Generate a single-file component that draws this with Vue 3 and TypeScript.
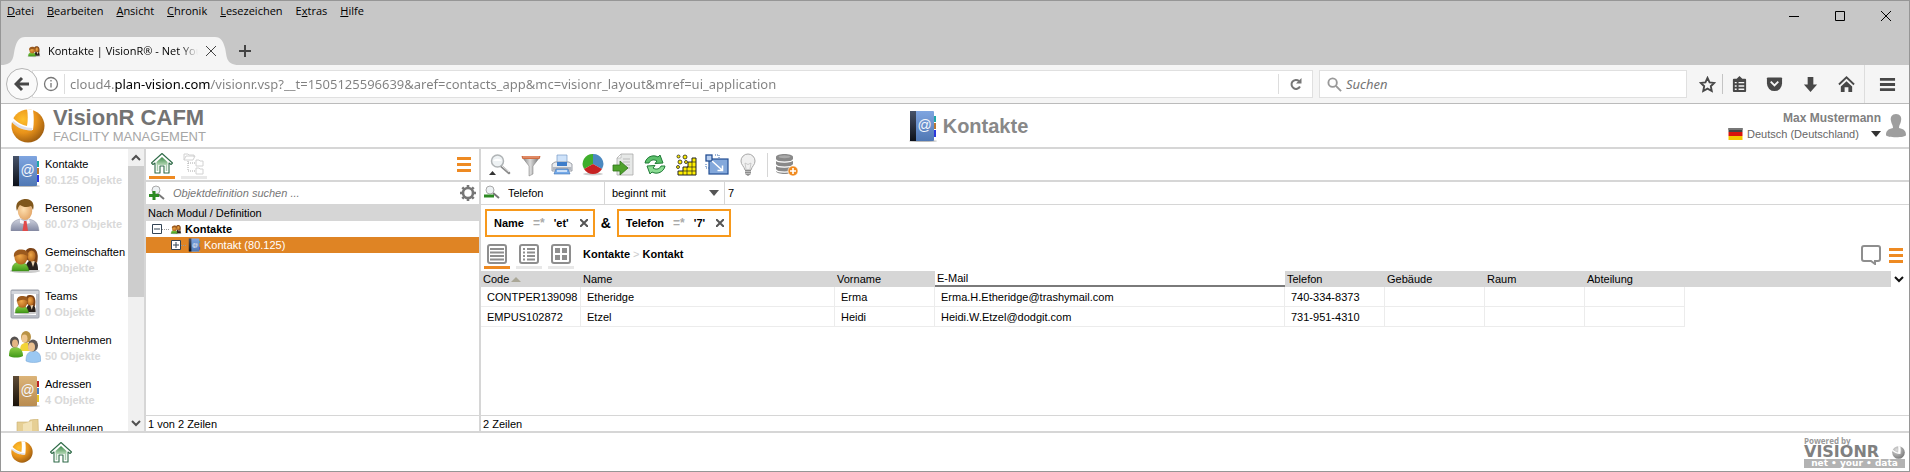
<script setup lang="ts">
import { ref } from 'vue'

interface Entry { label: string; count: string; icon: string }
interface Column { label: string; cls: string }

const menus: [string, string, string][] = [
  ['', 'D', 'atei'], ['', 'B', 'earbeiten'], ['', 'A', 'nsicht'], ['', 'C', 'hronik'],
  ['', 'L', 'esezeichen'], ['E', 'x', 'tras'], ['', 'H', 'ilfe'],
]
const url = ref('cloud4.plan-vision.com/visionr.vsp?__t=1505125596639&aref=contacts_app&mc=visionr_layout&mref=ui_application')
const entries: Entry[] = [
  { label: 'Kontakte', count: '80.125 Objekte', icon: 'book' },
  { label: 'Personen', count: '80.073 Objekte', icon: 'person' },
  { label: 'Gemeinschaften', count: '2 Objekte', icon: 'pair' },
  { label: 'Teams', count: '0 Objekte', icon: 'team' },
  { label: 'Unternehmen', count: '50 Objekte', icon: 'company' },
  { label: 'Adressen', count: '4 Objekte', icon: 'addresses' },
  { label: 'Abteilungen', count: '', icon: 'folder' },
]
const tools: [string, string][] = [
  ['search', 'Suchen'], ['funnel', 'Filter'], ['printer', 'Drucken'], ['pie', 'Diagramm'], ['export', 'Exportieren'],
  ['refresh', 'Aktualisieren'], ['cells', 'Tabelle'], ['resize', 'Anpassen'], ['bulb', 'Hinweis'],
]
const views: [string, string][] = [['rows', 'Tabelle'], ['list', 'Liste'], ['tiles', 'Kacheln']]
const chips = [{ field: 'Name', value: "'et'" }, { field: 'Telefon', value: "'7'" }]
const columns: Column[] = [
  { label: 'Code', cls: 'c-code' }, { label: 'Name', cls: 'c-name' }, { label: 'Vorname', cls: 'c-first' },
  { label: 'E-Mail', cls: 'c-mail' }, { label: 'Telefon', cls: 'c-std' }, { label: 'Gebäude', cls: 'c-std' },
  { label: 'Raum', cls: 'c-std' }, { label: 'Abteilung', cls: 'c-std' },
]
const rows: string[][] = [
  ['CONTPER139098', 'Etheridge', 'Erma', 'Erma.H.Etheridge@trashymail.com', '740-334-8373', '', '', ''],
  ['EMPUS102872', 'Etzel', 'Heidi', 'Heidi.W.Etzel@dodgit.com', '731-951-4310', '', '', ''],
]
const field = ref('Telefon')
const term = ref('7')
const view = ref('rows')
</script>

<template>
  <div class="window">
    <svg class="defs" aria-hidden="true">
      <defs>
        <linearGradient id="gBlue" x1="0" y1="0" x2="0" y2="1"><stop offset="0" stop-color="#7fa5e0" /><stop offset="1" stop-color="#5078b4" /></linearGradient>
        <linearGradient id="gTan" x1="0" y1="0" x2="0" y2="1"><stop offset="0" stop-color="#dcb479" /><stop offset="1" stop-color="#b98c50" /></linearGradient>
        <linearGradient id="gDark" x1="0" y1="0" x2="0" y2="1"><stop offset="0" stop-color="#47536a" /><stop offset="1" stop-color="#0c1018" /></linearGradient>
        <linearGradient id="gBrown" x1="0" y1="0" x2="0" y2="1"><stop offset="0" stop-color="#5f4c36" /><stop offset="1" stop-color="#1a120a" /></linearGradient>
        <linearGradient id="gGreen" x1="0" y1="0" x2="0" y2="1"><stop offset="0" stop-color="#3c8a48" /><stop offset="1" stop-color="#b5d8b6" /></linearGradient>
        <linearGradient id="gShirt" x1="0" y1="0" x2="0" y2="1"><stop offset="0" stop-color="#cfd2de" /><stop offset="1" stop-color="#8288a2" /></linearGradient>
        <linearGradient id="gLime" x1="0" y1="0" x2="0" y2="1"><stop offset="0" stop-color="#8fd048" /><stop offset="1" stop-color="#3f9818" /></linearGradient>
        <linearGradient id="gMetal" x1="0" y1="0" x2="1" y2="0"><stop offset="0" stop-color="#777" /><stop offset=".45" stop-color="#ddd" /><stop offset="1" stop-color="#666" /></linearGradient>
        <radialGradient id="gSkin" cx=".4" cy=".4" r=".7"><stop offset="0" stop-color="#ffe0b0" /><stop offset="1" stop-color="#e0a060" /></radialGradient>
        <radialGradient id="gBall" cx=".35" cy=".3" r=".75"><stop offset="0" stop-color="#ffc02c" /><stop offset=".55" stop-color="#e8921a" /><stop offset="1" stop-color="#9c5c10" /></radialGradient>
        <radialGradient id="gGray" cx=".35" cy=".3" r=".75"><stop offset="0" stop-color="#ddd" /><stop offset="1" stop-color="#777" /></radialGradient>
        <radialGradient id="gFace" cx=".4" cy=".4" r=".7"><stop offset="0" stop-color="#f0a848" /><stop offset="1" stop-color="#a85c18" /></radialGradient>
      </defs>

      <symbol id="book" viewBox="0 0 32 32">
        <ellipse cx="17" cy="31" rx="14" ry="1" fill="#bbb" />
        <path d="M28 6h2v6h-2z" fill="#1fa6a6" /><path d="M28 13h2v6h-2z" fill="#b97732" /><path d="M28 20h2v7h-2z" fill="#2c38dc" />
        <rect x="9" y="1" width="19" height="30" rx="1" fill="url(#gBlue)" />
        <rect x="4" y="1" width="6" height="30" fill="url(#gDark)" />
        <text x="18.500" y="20" class="at">@</text>
      </symbol>
      <symbol id="addresses" viewBox="0 0 32 32">
        <ellipse cx="17" cy="31" rx="14" ry="1" fill="#bbb" />
        <path d="M28 6h2v6h-2z" fill="#b92222" /><path d="M28 13h2v6h-2z" fill="#4a80c4" /><path d="M28 20h2v7h-2z" fill="#e4c32a" />
        <rect x="9" y="1" width="19" height="30" rx="1" fill="url(#gTan)" />
        <rect x="4" y="1" width="6" height="30" fill="url(#gBrown)" />
        <text x="18.500" y="20" class="at">@</text>
      </symbol>
      <symbol id="person" viewBox="0 0 32 32">
        <path d="M2 32c0-7 1-10 9-12h9c8 2 9 5 10 12z" fill="url(#gShirt)" stroke="#888da0" stroke-width=".5" />
        <path d="M11 20l5 3 4-3 1 4-4 1-2 0-4-1z" fill="#f6f7fb" /><path d="M15 22h2.500l1.500 10h-5.500z" fill="#e14a4a" />
        <ellipse cx="16" cy="12" rx="7.200" ry="9" fill="url(#gSkin)" />
        <path d="M8 12C5 2 13 0 17 0c6 0 9 5 7 11l-2-4c-4 2-8 1-11-1-1 1-2 3-3 6z" fill="#80571c" />
      </symbol>
      <symbol id="pair" viewBox="0 0 32 32">
        <ellipse cx="16" cy="28" rx="15" ry="2" fill="#ccc" />
        <path d="M16 27c1-8 4-10 8-10 4 1 5 5 5 10z" fill="#29211b" /><path d="M22 18h4l-2 6z" fill="#e9d2b0" />
        <path d="M17 16C15 7 18 5 22 5c6 0 8 6 6 15l-3-2h-5z" fill="#7d4417" />
        <ellipse cx="22.500" cy="13" rx="4" ry="5.500" fill="url(#gFace)" />
        <path d="M3 28c0-6 2-8 7-9 6 0 9 3 10 9z" fill="url(#gLime)" stroke="#3d8a1c" stroke-width=".5" />
        <ellipse cx="12" cy="14.500" rx="6.500" ry="7" fill="url(#gFace)" />
        <path d="M5 14C4 8 9 6 13 6.500c5 .5 7 3 6 7-4-3-9-3-14 .5z" fill="#9b5a1e" />
      </symbol>
      <symbol id="team" viewBox="0 0 32 32">
        <rect x="2" y="3" width="28" height="28" rx="1" fill="#b9bdc6" stroke="#9a9fa9" /><rect x="5" y="7" width="22" height="21" fill="#fff" />
        <path d="M2.500 4h27v3h-27z" fill="#d3d6dc" /><use href="#pair" x="4" y="4" width="25" height="25" />
      </symbol>
      <symbol id="company" viewBox="0 0 32 32">
        <path d="M11 20c0-6 2-8 6-8s6 2 6 8z" fill="#f3d437" /><ellipse cx="17" cy="6" rx="5" ry="6" fill="#b99245" /><ellipse cx="15.500" cy="7.500" rx="3" ry="4" fill="#efc791" />
        <path d="M0 25c0-7 2-9 7-9 5 1 7 4 7 9-4 2-10 2-14 0z" fill="url(#gLime)" /><ellipse cx="5.500" cy="11" rx="4.500" ry="5.500" fill="#565250" /><ellipse cx="6" cy="12.500" rx="3" ry="4" fill="#e4b684" />
        <path d="M17 30c0-7 2-9 7-10 6 0 8 4 8 10-4 2-11 2-15 0z" fill="#9bc8f2" stroke="#73a2d2" stroke-width=".5" /><ellipse cx="24" cy="14.500" rx="5" ry="6" fill="#5d5654" /><ellipse cx="22.500" cy="16" rx="3.500" ry="4.500" fill="#eac090" />
      </symbol>
      <symbol id="folder" viewBox="0 0 32 32">
        <path d="M8 3h12l1-2 8-1 1 30H8z" fill="#e6cf94" stroke="#c9ae6e" stroke-width=".6" /><path d="M14 5l9-3v28h-9z" fill="#f2e2b6" />
      </symbol>
      <symbol id="house" viewBox="0 0 24 24">
        <path d="M12 2.500L1.500 12l1.500 1.500 2-1.500v10h5v-7h4v7h5V12l2 1.500 1.500-1.500z" fill="#fff" stroke="#2f6b48" stroke-width="1.100" stroke-linejoin="round" />
        <path d="M12 6L6.500 11v3h11v-3z" fill="url(#gGreen)" /><path d="M7.500 14v6M16.500 14v6" stroke="#a9cfae" stroke-width="1.500" />
      </symbol>
      <symbol id="ball" viewBox="0 0 34 34">
        <circle cx="17" cy="17" r="16.500" fill="url(#gBall)" />
        <path d="M0 12l2-3c5 5 9 7 14 8 1-6 1-11 0-17l6 1c1 6 1 13 0 20-9 0-16-3-22-9z" fill="#fff" />
        <path d="M1 13.500c6 6 12 8 20 8l.5-2.500c-8 0-14-3-19-7z" fill="#dfdfe8" />
      </symbol>
      <symbol id="ballMono" viewBox="0 0 34 34">
        <circle cx="17" cy="17" r="16.500" fill="url(#gGray)" /><path d="M0 12l2-3c5 5 9 7 14 8 1-6 1-11 0-17l6 1c1 6 1 13 0 20-9 0-16-3-22-9z" fill="#fff" />
      </symbol>

      <symbol id="search" viewBox="0 0 24 24">
        <path d="M13 13l8 7" stroke="#8b8b8b" stroke-width="2.500" stroke-linecap="round" /><path d="M14 13l7 6" stroke="#eee" stroke-width="1" />
        <circle cx="9.500" cy="8" r="6" fill="#eef2f4" stroke="#b0b4b6" stroke-width="1.500" /><path d="M5 8a5 4 0 0 1 9 0z" fill="#fff" />
        <path d="M1 22l3.500-4 3.500 4z" fill="#333" />
      </symbol>
      <symbol id="funnel" viewBox="0 0 24 24">
        <path d="M3 4h18l-7 9v8l-4 2V13z" fill="url(#gMetal)" stroke="#777" stroke-width=".5" /><path d="M2.500 3h19l-1 3h-17z" fill="#cf6d43" /><path d="M4 4h16" stroke="#f0a787" />
      </symbol>
      <symbol id="printer" viewBox="0 0 24 24">
        <path d="M7 2h10v9H7z" fill="#cfe3fa" stroke="#7799c4" stroke-width=".7" /><path d="M2 11l3-2h14l3 2v7H2z" fill="#e9ebee" stroke="#878c94" stroke-width=".8" />
        <path d="M2.500 14h19v3h-19z" fill="#b4b8c0" /><path d="M7 9h10v4H7z" fill="#3e7dca" /><path d="M6 16h12l2 5H4z" fill="#76abea" stroke="#3d6fae" stroke-width=".6" /><path d="M7 18h10" stroke="#fff" stroke-width="1.300" />
      </symbol>
      <symbol id="pie" viewBox="0 0 24 24">
        <ellipse cx="12" cy="21" rx="10" ry="1.500" fill="#ccc" />
        <path d="M12 11V1a10 10 0 0 0-9 15z" fill="#3fae2c" /><path d="M12 11V1a10 10 0 0 1 9 15z" fill="#4b89c0" /><path d="M12 11l9 5a10.500 10.500 0 0 1-18 0z" fill="#c62222" />
      </symbol>
      <symbol id="export" viewBox="0 0 24 24">
        <path d="M9 1h12v21H5V5z" fill="#e6e8e7" stroke="#aaa" stroke-width=".8" /><path d="M11 6h7M11 9h7M14 12h4M14 15h4" stroke="#bbb" /><path d="M9 1v4H5z" fill="#fff" stroke="#aaa" stroke-width=".6" />
        <path d="M1 12h7V8l8 7-8 7v-4H1z" fill="#4ea22c" stroke="#2f7418" stroke-width=".8" />
      </symbol>
      <symbol id="refresh" viewBox="0 0 24 24">
        <path d="M2 10c1-6 8-9 13-6l2-2 3 8-8 .5 2-2.500c-3-2-7-1-8 2z" fill="#5cc06b" stroke="#207a37" stroke-width="1" stroke-linejoin="round" />
        <path d="M22 13c-1 6-8 9-13 6l-2 2-3-8 8-.5-2 2.500c3 2 7 1 8-2z" fill="#8bdc93" stroke="#207a37" stroke-width="1" stroke-linejoin="round" />
      </symbol>
      <symbol id="cells" viewBox="0 0 24 24">
        <path d="M4 22v-4h5v-4h5v-5h4V5h4v17z" fill="#ffef00" stroke="#222" /><path d="M9 22v-4h13M13 22v-8h9M18 22V9h4" fill="none" stroke="#222" stroke-width=".7" />
        <g fill="#ffef00" stroke="#222" stroke-width=".8"><circle cx="4.500" cy="3.500" r="1.500" /><circle cx="11" cy="4" r="2" /><circle cx="6" cy="9" r="2" /><circle cx="12" cy="9" r="1.500" /><circle cx="4" cy="14" r="1.500" /></g>
      </symbol>
      <symbol id="resize" viewBox="0 0 24 24">
        <rect x="4" y="6" width="19" height="15" fill="#83a8db" stroke="#244f93" stroke-width="1.200" /><path d="M10 2h4v3M1 11v4h3" fill="none" stroke="#3768ac" stroke-dasharray="1 1" />
        <rect x="1" y="2" width="6" height="6" fill="#b7cef0" stroke="#244f93" stroke-width="1.300" /><path d="M7 8l10 9M17.500 12.500v5h-5" fill="none" stroke="#fff" stroke-width="1.500" />
      </symbol>
      <symbol id="bulb" viewBox="0 0 24 24">
        <path d="M12 1a7 7 0 0 0-7 7c0 4 3 5 4 9h6c1-4 4-5 4-9a7 7 0 0 0-7-7z" fill="#f0f0f0" stroke="#a8a8a8" /><path d="M10 16l-1-6 3 1.500 3-1.500-1 6" fill="none" stroke="#c0c0c0" stroke-width=".8" />
        <path d="M9 17h6v4l-3 2-3-2z" fill="#8d8d8d" /><path d="M9 18.500h6M9 20.500h6" stroke="#ddd" stroke-width=".6" />
      </symbol>
      <symbol id="database" viewBox="0 0 24 24">
        <path d="M1 4c0-4 17-4 17 0v14c0 4-17 4-17 0z" fill="#898989" /><path d="M1 6.500c0 3.500 17 3.500 17 0M1 11.500c0 3.500 17 3.500 17 0M1 16.500c0 3.500 17 3.500 17 0" fill="none" stroke="#fff" stroke-width="1.300" /><ellipse cx="9.500" cy="3.700" rx="6" ry="1.500" fill="#aaa" />
        <circle cx="18" cy="18" r="5" fill="#f18a1e" stroke="#fff" stroke-width=".6" /><path d="M18 15v6M15 18h6" stroke="#fff" stroke-width="1.600" />
      </symbol>
      <symbol id="rows" viewBox="0 0 20 20"><rect x="1" y="1" width="18" height="18" rx="2" /><path d="M3 5h14M3 8.500h14M3 12h14M3 15.500h14" /></symbol>
      <symbol id="list" viewBox="0 0 20 20"><rect x="1" y="1" width="18" height="18" rx="2" /><path d="M4 5h2M8 5h8M4 8.500h2M8 8.500h8M4 12h2M8 12h8M4 15.500h2M8 15.500h8" /></symbol>
      <symbol id="tiles" viewBox="0 0 20 20"><rect x="1" y="1" width="18" height="18" rx="2" /><path d="M4 6.500h5M11 6.500h5M4 13.500h5M11 13.500h5" stroke-width="5" /></symbol>
    </svg>

    <header class="chrome">
      <nav class="menu" aria-label="Menü">
        <button v-for="m in menus" :key="m[2]" type="button">{{ m[0] }}<u>{{ m[1] }}</u>{{ m[2] }}</button>
      </nav>
      <div class="controls">
        <button type="button" aria-label="Minimieren"><svg viewBox="0 0 12 12"><path d="M1 6.500h10" /></svg></button>
        <button type="button" aria-label="Maximieren"><svg viewBox="0 0 12 12"><path d="M1.500 1.500h9v9h-9z" /></svg></button>
        <button type="button" aria-label="Schließen"><svg viewBox="0 0 12 12"><path d="M1 1l10 10M11 1L1 11" /></svg></button>
      </div>
      <div class="tabs">
        <div class="tab">
          <svg class="tab-edge" viewBox="0 0 24 28"><path d="M0 28C14 28 12 18 14 11 16 4 18 0 24 0v28z" /></svg>
          <div class="tab-body">
            <svg class="s14"><use href="#pair" /></svg>
            <span class="tab-title">Kontakte | VisionR® - Net Your Data</span>
            <button type="button" aria-label="Tab schließen"><svg class="s12 thin" viewBox="0 0 12 12"><path d="M1 1l10 10M11 1L1 11" /></svg></button>
          </div>
          <svg class="tab-edge" viewBox="0 0 24 28"><path d="M24 28C10 28 12 18 10 11 8 4 6 0 0 0v28z" /></svg>
        </div>
        <button class="newtab" type="button" aria-label="Neuer Tab"><svg class="s12" viewBox="0 0 12 12"><path d="M6 0v12M0 6h12" /></svg></button>
      </div>
    </header>

    <div class="navbar">
      <button class="back" type="button" aria-label="Zurück"><svg viewBox="0 0 16 16"><path d="M15 8H3M8 2L2 8l6 6" /></svg></button>
      <div class="address">
        <svg class="info" viewBox="0 0 16 16"><circle cx="8" cy="8" r="6.500" /><path d="M8 7v4.500M8 4v1.500" /></svg>
        <input v-model="url" aria-label="Adresse" />
        <button type="button" aria-label="Neu laden"><svg viewBox="0 0 14 14"><path d="M11 9.500A4.500 4.500 0 1 1 10 4" /><path class="solid" d="M12.500 1v5.500H7z" /></svg></button>
      </div>
      <label class="find">
        <svg viewBox="0 0 16 16"><circle cx="6" cy="6" r="4.500" /><path d="M9.500 9.500L15 15" /></svg>
        <input placeholder="Suchen" aria-label="Suchen" />
      </label>
      <div class="actions">
        <button type="button" aria-label="Lesezeichen"><svg viewBox="0 0 18 18"><path class="line" d="M9 2l2.200 4.700 5 .6-3.700 3.500 1 5.100L9 13.400l-4.500 2.500 1-5.100L1.800 7.300l5-.6z" /></svg></button>
        <button type="button" aria-label="Leseliste"><svg viewBox="0 0 18 18"><path d="M3 3h3l3-3 3 3h3q1 0 1 1v12q0 1-1 1H3q-1 0-1-1V4q0-1 1-1z" /><path class="cut" d="M4 7h2M8 7h6M4 10.500h2M8 10.500h6M4 14h2M8 14h6" /></svg></button>
        <button type="button" aria-label="Pocket"><svg viewBox="0 0 18 18"><path d="M2 1.500h14q1 0 1 1V8a8 8 0 0 1-16 0V2.500q0-1 1-1z" /><path class="cut wide" d="M5 6l4 4 4-4" /></svg></button>
        <button type="button" aria-label="Downloads"><svg viewBox="0 0 18 18"><path d="M6 1h6v8h4l-7 8-7-8h4z" /></svg></button>
        <button type="button" aria-label="Startseite"><svg viewBox="0 0 18 18"><path d="M9 5.500l6 5.500v6h-4v-5H7v5H3v-6z" /><path class="line" d="M1 9l8-7.500L17 9" /></svg></button>
        <button class="burger-dark" type="button" aria-label="Menü öffnen"><svg viewBox="0 0 18 18"><path d="M1 2h16v3H1zM1 7.500h16v3H1zM1 13h16v3H1z" /></svg></button>
      </div>
    </div>

    <header class="app-head">
      <div class="brand">
        <svg class="logo"><use href="#ball" /></svg>
        <div><strong>VisionR CAFM</strong><span>FACILITY MANAGEMENT</span></div>
      </div>
      <h1><svg class="s32"><use href="#book" /></svg>Kontakte</h1>
      <div class="user">
        <div class="who">
          <b>Max Mustermann</b>
          <label class="lang">
            <svg viewBox="0 0 14 12"><path d="M0 0h14v4H0z" fill="#444" /><path d="M0 4h14v4H0z" fill="#d8140c" /><path d="M0 8h14v4H0z" fill="#f4c800" /><path d="M0 0h14v2H0z" fill="#777" /></svg>
            <select aria-label="Sprache"><option>Deutsch (Deutschland)</option></select>
            <i class="caret"></i>
          </label>
        </div>
        <svg class="avatar" viewBox="0 0 20 24"><path d="M10 0c4 0 6 3 5 7-.5 3-2 4-2 7 5 1 7 3 7 7 0 3-20 3-20 0 0-4 2-6 7-7 0-3-1.500-4-2-7-1-4 1-7 5-7z" /></svg>
      </div>
    </header>

    <div class="body">
      <aside class="side">
        <nav aria-label="Module">
          <a v-for="e in entries" :key="e.label" href="#">
            <svg class="s32"><use :href="'#' + e.icon" /></svg>
            <span>{{ e.label }}<b>{{ e.count }}</b></span>
          </a>
        </nav>
        <div class="scroll">
          <button type="button" aria-label="Nach oben"><svg viewBox="0 0 10 10"><path d="M1 7l4-4 4 4" /></svg></button>
          <div class="track"><div class="thumb"></div></div>
          <button type="button" aria-label="Nach unten"><svg viewBox="0 0 10 10"><path d="M1 3l4 4 4-4" /></svg></button>
        </div>
      </aside>

      <section class="tree">
        <div class="bar">
          <button class="viewtab on" type="button" aria-label="Startseite"><svg class="s24"><use href="#house" /></svg></button>
          <button class="viewtab" type="button" aria-label="Baum">
            <svg class="s24" viewBox="0 0 24 24"><path d="M2 9V3h4l1 1h5v2M2 9l2-4h9l-2 4zM14 9h3l1 1h3v5h-7zM14 17h3l1 1h3v5h-7z" fill="#fff" stroke="#d2d2d2" /><path d="M6 10v10h7M6 12h7" fill="none" stroke="#aaa" stroke-dasharray="1 1" /></svg>
          </button>
          <button class="burger push" type="button" aria-label="Optionen"><i></i><i></i><i></i></button>
        </div>
        <label class="line-row">
          <svg class="s16" viewBox="0 0 16 16"><path d="M9 9l6 5" stroke="#777" stroke-width="2" /><circle cx="7" cy="5" r="4" fill="#eef2f4" stroke="#aaa" /><path d="M5 6v9M0 10.500h10" stroke="#2c8a22" stroke-width="3" /></svg>
          <input class="grow ital" placeholder="Objektdefinition suchen ..." aria-label="Objektdefinition suchen" />
          <svg class="gear" viewBox="0 0 16 16"><circle cx="8" cy="8" r="5" /><path d="M8 0v2.500M8 13.500V16M0 8h2.500M13.500 8H16M2.300 2.300l2 2M11.700 11.700l2 2M2.300 13.700l2-2M11.700 4.300l2-2" /></svg>
        </label>
        <div class="tree-head">Nach Modul / Definition</div>
        <div class="node"><svg class="s10 box" viewBox="0 0 10 10"><path d="M.5.5h9v9h-9zM2 5h6" /></svg><i class="dots"></i><svg class="s12"><use href="#pair" /></svg><b>Kontakte</b></div>
        <div class="node child"><svg class="s10 box" viewBox="0 0 10 10"><path d="M.5.5h9v9h-9zM2 5h6M5 2v6" /></svg><i class="dots"></i><svg class="s14"><use href="#book" /></svg><span>Kontakt (80.125)</span></div>
        <div class="status">1 von 2 Zeilen</div>
      </section>

      <main class="main">
        <div class="bar tools">
          <button v-for="t in tools" :key="t[0]" type="button" :aria-label="t[1]"><svg class="s24"><use :href="'#' + t[0]" /></svg></button>
          <button class="ruled" type="button" aria-label="Datenbank"><svg class="s24"><use href="#database" /></svg></button>
        </div>
        <div class="line-row criteria">
          <svg class="s16" viewBox="0 0 16 16"><path d="M9 8l6 5" stroke="#777" stroke-width="2" /><circle cx="6" cy="5" r="4" fill="#eef2f4" stroke="#aaa" /><path d="M0 11h10" stroke="#2c8a22" stroke-width="3" /></svg>
          <input v-model="field" class="f-field" aria-label="Feld" />
          <label class="f-op"><select aria-label="Operator"><option>beginnt mit</option></select><i class="caret"></i></label>
          <input v-model="term" class="f-term" aria-label="Wert" />
        </div>
        <div class="chips">
          <template v-for="(c, i) in chips" :key="c.field">
            <em v-if="i">&amp;</em>
            <span class="chip">{{ c.field }}<span class="op">=*</span>{{ c.value }}
              <button type="button" :aria-label="c.field + ' entfernen'"><svg viewBox="0 0 8 8"><path d="M0 0l8 8M8 0L0 8" /></svg></button>
            </span>
          </template>
        </div>
        <div class="viewbar">
          <button v-for="v in views" :key="v[0]" class="viewtab" :class="{ on: view === v[0] }" type="button" :aria-label="v[1]" @click="view = v[0]"><svg class="s20"><use :href="'#' + v[0]" /></svg></button>
          <nav class="crumbs" aria-label="Pfad"><a href="#">Kontakte</a><i>&gt;</i><a href="#">Kontakt</a></nav>
          <button class="push bubble" type="button" aria-label="Kommentar"><svg class="s20" viewBox="0 0 20 20"><path d="M3 1h14q2 0 2 2v11q0 2-2 2h-3v3l-4-3H3q-2 0-2-2V3q0-2 2-2z" /></svg></button>
          <button class="burger" type="button" aria-label="Optionen"><i></i><i></i><i></i></button>
        </div>
        <table>
          <colgroup><col v-for="c in columns" :key="c.label" :class="c.cls" /><col /><col class="c-end" /></colgroup>
          <thead>
            <tr>
              <th v-for="(c, i) in columns" :key="c.label" scope="col" :class="{ active: i === 3 }">{{ c.label }}<i v-if="i === 0" class="sort"></i></th>
              <th></th>
              <th class="more"><button type="button" aria-label="Spalten"><svg viewBox="0 0 10 10"><path d="M1 3l4 4 4-4" /></svg></button></th>
            </tr>
          </thead>
          <tbody>
            <tr v-for="r in rows" :key="r[0]"><td v-for="(cell, i) in r" :key="i">{{ cell }}</td></tr>
          </tbody>
        </table>
        <div class="status">2 Zeilen</div>
      </main>
    </div>

    <footer class="foot">
      <a href="#" aria-label="VisionR"><svg class="s22"><use href="#ball" /></svg></a>
      <a href="#" aria-label="Startseite"><svg class="s24"><use href="#house" /></svg></a>
      <div class="powered">
        <small>Powered by</small>
        <div><b>VISIONR</b><svg><use href="#ballMono" /></svg></div>
        <span>net • your • data</span>
      </div>
    </footer>
  </div>
</template>

<style>
body { margin: 0; }
.at { font: 14px "Liberation Sans", Arial, sans-serif; fill: #f4f7fc; text-anchor: middle; }
</style>

<style scoped>
.window { box-sizing: border-box; height: 100vh; display: flex; flex-direction: column; border: 1px solid #969696; background: #fff; color: #000; font: 11px/16px "Liberation Sans", Arial, sans-serif; overflow: hidden; }
.window * { box-sizing: border-box; }
.defs { position: absolute; width: 0; height: 0; }
svg { display: block; flex: none; }
button { border: 0; padding: 0; margin: 0; background: none; font: inherit; color: inherit; display: flex; align-items: center; justify-content: center; flex: none; }
input, select { border: 0; padding: 0; margin: 0; outline: 0; background: none; font: inherit; color: inherit; min-width: 0; appearance: none; }
a { color: inherit; text-decoration: none; }
i, em { font-style: normal; }
.s10 { width: 10px; height: 10px; } .s12 { width: 12px; height: 12px; } .s14 { width: 14px; height: 14px; }
.s16 { width: 16px; height: 16px; } .s20 { width: 20px; height: 20px; } .s22 { width: 22px; height: 22px; }
.s24 { width: 24px; height: 24px; } .s32 { width: 32px; height: 32px; }
.push { margin-left: auto; }

.chrome { display: grid; grid-template-columns: 1fr auto; background: #c7c7c7; font: 11px/16px "Open Sans", "Noto Sans", sans-serif; }
.menu { display: flex; gap: 13px; padding: 2px 6px; height: 36px; align-items: flex-start; }
.menu button { display: block; }
.controls { display: flex; gap: 34px; padding: 8px 17px 0 0; align-items: flex-start; }
.controls svg { width: 12px; height: 14px; fill: none; stroke: #000; }
.tabs { grid-column: 1 / -1; display: flex; height: 28px; align-items: center; }
.tab { display: flex; width: 238px; }
.tab-edge { width: 24px; height: 28px; fill: #f5f5f5; }
.tab-body { flex: 1; min-width: 0; display: flex; align-items: center; background: #f5f5f5; gap: 7px; padding-left: 2px; }
.tab-title { flex: 1; overflow: hidden; white-space: nowrap; mask-image: linear-gradient(90deg, #000 88%, transparent); }
.tab-body svg path, .newtab path { fill: none; stroke: #444; }
.tab-body button { z-index: 1; margin-right: -2px; }
.newtab path { stroke-width: 2; }

.navbar { display: flex; align-items: center; height: 39px; background: #f5f5f5; border-bottom: 1px solid #bbb; padding-left: 5px; font: 13px/20px "Noto Sans", "Open Sans", sans-serif; }
.back { width: 32px; height: 32px; border: 1px solid #b5b5b5; border-radius: 50%; background: #fafafa; z-index: 1; }
.back svg { width: 16px; height: 16px; fill: none; stroke: #484848; stroke-width: 3; }
.address { flex: 1; display: flex; align-items: center; height: 28px; margin-left: -6px; background: #fff; border: 1px solid #e0e0e0; padding-left: 10px; }
.info { width: 16px; height: 16px; fill: none; stroke: #777; stroke-width: 1.3; }
.address input { flex: 1; height: 20px; margin-left: 5px; padding-left: 5px; border-left: 1px solid #ddd; color: transparent; caret-color: #000; background: linear-gradient(90deg, #808080 50px, #000 50px, #000 146px, #808080 146px) text; }
.address button { width: 34px; height: 20px; border-left: 1px solid #ddd; }
.address button svg { width: 14px; height: 14px; fill: none; stroke: #777; stroke-width: 2; }
.address .solid { fill: #777; stroke: none; }
.find { display: flex; align-items: center; gap: 4px; width: 368px; height: 28px; margin-left: 6px; padding-left: 7px; background: #fff; border: 1px solid #e0e0e0; }
.find svg { width: 15px; height: 15px; fill: none; stroke: #999; stroke-width: 2; }
.find input { flex: 1; font-style: italic; }
.find input::placeholder { color: #757575; opacity: 1; }
.actions { display: flex; align-items: center; align-self: stretch; }
.actions button { width: 36px; height: 20px; }
.actions button:first-child { border-right: 1px solid #c4c4c4; padding-left: 6px; }
.actions button:nth-child(2) { width: 33px; }
.actions svg { width: 17px; height: 17px; fill: #484848; }
.actions .line { fill: none; stroke: #484848; stroke-width: 2; }
.actions .cut { fill: none; stroke: #f5f5f5; stroke-width: 1.5; } .actions .wide { stroke-width: 2; }
.actions .burger-dark { width: 45px; align-self: stretch; height: auto; border-left: 1px solid #ddd; }

.app-head { display: grid; grid-template-columns: 1fr auto 1fr; align-items: center; height: 45px; border-bottom: 2px solid #d6d6d6; }
.brand { display: flex; align-items: center; gap: 8px; padding-left: 10px; }
.logo { width: 34px; height: 34px; }
.brand strong { display: block; font-size: 22px; line-height: 23px; color: #737373; }
.brand span { display: block; font-size: 13px; line-height: 16px; color: #a6a6a6; }
h1 { margin: 0; padding-left: 24px; display: flex; align-items: center; gap: 5px; font-size: 20px; line-height: 24px; color: #888; }
.user { display: flex; justify-content: flex-end; align-items: center; gap: 5px; padding-right: 3px; }
.who { text-align: right; font-size: 12px; line-height: 16px; color: #808080; }
.lang { display: flex; align-items: center; gap: 4px; font-size: 11px; color: #666; }
.lang svg { width: 15px; height: 12px; }
.lang .caret { margin-left: 8px; }
.caret { width: 0; height: 0; border: 5px solid transparent; border-bottom: 0; border-top: 6px solid #333; flex: none; }
.avatar { width: 20px; height: 24px; fill: #9e9e9e; }

.body { flex: 1; min-height: 0; display: flex; }
.side { display: flex; width: 145px; border-right: 2px solid #d6d6d6; flex: none; }
.side nav { flex: 1; min-width: 0; overflow: hidden; }
.side a { display: flex; gap: 4px; height: 44px; padding: 6px 0 0 8px; white-space: nowrap; }
.side a span { margin-top: 1px; }
.side a b { display: block; color: #d9d9d9; }
.scroll { display: flex; flex-direction: column; width: 16px; background: #f0f0f0; flex: none; }
.scroll button { height: 17px; }
.scroll svg, .more svg { width: 10px; height: 10px; fill: none; stroke: #505050; stroke-width: 2; }
.track { flex: 1; } .thumb { height: 53%; background: #cdcdcd; }

.tree { display: flex; flex-direction: column; width: 335px; border-right: 2px solid #d6d6d6; flex: none; }
.bar { display: flex; height: 33px; border-bottom: 2px solid #d6d6d6; padding: 0 8px 0 3px; gap: 6px; flex: none; align-items: center; }
.viewtab { width: 26px; height: 29px; border-bottom: 3px solid #e8e8e8; }
.viewtab.on { border-color: #ee8a22; }
.burger { width: 14px; height: 15px; flex-direction: column; justify-content: space-between; }
.burger i { width: 14px; height: 3px; background: #ee8a22; }
.line-row { display: flex; align-items: center; height: 23px; border-bottom: 1px solid #d6d6d6; padding: 0 3px; flex: none; }
.grow { flex: 1; } .ital { font-style: italic; padding-left: 8px; } .ital::placeholder { color: #777; opacity: 1; }
.gear { width: 16px; height: 16px; fill: none; stroke: #777; stroke-width: 2.6; }
.tree-head { height: 16px; padding-left: 2px; background: #d6d6d6; }
.node { display: flex; align-items: center; height: 16px; padding-left: 6px; }
.node b, .node span { padding-left: 3px; }
.child { padding-left: 25px; background: #df8424; color: #fff; }
.box { fill: #fff; stroke: #345; }
.dots { width: 7px; border-top: 1px dotted #999; margin-right: 1px; }
.child .dots { width: 5px; }
.status { margin-top: auto; height: 16px; padding-left: 2px; border-top: 1px solid #d6d6d6; }

.main { flex: 1; min-width: 0; display: flex; flex-direction: column; }
.tools { gap: 7px; padding-left: 7px; }
.tools .ruled { border-left: 1px solid #d6d6d6; padding-left: 7px; }
.criteria input, .criteria select { height: 100%; }
.f-field { width: 104px; padding-left: 8px; }
.f-op { display: flex; align-items: center; width: 121px; height: 100%; border: solid #d6d6d6; border-width: 0 1px; padding: 0 5px 0 7px; }
.f-op select { flex: 1; } .f-op .caret { border-top-color: #555; }
.f-term { flex: 1; padding-left: 3px; }
.chips { display: flex; align-items: center; gap: 6px; padding: 4px 4px 5px; font-weight: 700; }
.chips em { font-size: 14px; }
.chip { display: flex; align-items: center; height: 28px; border: 2px solid #f7991c; padding: 0 5px 0 7px; }
.op { color: #aaa; font-size: 12px; margin: 0 9px; }
.chip button { margin-left: 11px; } .chip svg { width: 8px; height: 8px; fill: none; stroke: #555; stroke-width: 2; }
.viewbar { display: flex; align-items: flex-start; gap: 6px; height: 29px; padding: 0 6px 0 3px; }
.viewbar .viewtab { height: 27px; }
.viewbar svg { fill: none; stroke: #8e8e8e; stroke-width: 2; }
.crumbs { display: flex; gap: 3px; margin-left: 3px; font-weight: 700; line-height: 24px; } .crumbs i { color: #ccc; font-weight: 400; }
.bubble { margin-right: 2px; height: 25px; }
.viewbar .burger { margin-top: 6px; }
table { width: 100%; border-collapse: separate; border-spacing: 0; table-layout: fixed; }
.c-code { width: 100px; } .c-name { width: 254px; } .c-first { width: 100px; } .c-mail { width: 350px; } .c-std { width: 100px; } .c-end { width: 18px; }
th { height: 16px; padding: 0 0 0 2px; background: #d6d6d6; font-weight: 400; text-align: left; line-height: 16px; }
th.active { background: #fff; border-bottom: 2px solid #7a7a7a; line-height: 14px; }
th.more { background: #fff; padding: 0; } .more button { width: 16px; height: 16px; } .more svg { stroke: #111; }
.sort { display: inline-block; margin-left: 2px; border: 5px solid transparent; border-top: 0; border-bottom-color: #aaa797; vertical-align: 1px; }
td { height: 20px; padding: 2px 0 0 6px; line-height: 17px; border: solid #ececec; border-width: 0 1px 1px 0; white-space: nowrap; }

.foot { display: flex; align-items: center; height: 40px; border-top: 2px solid #d6d6d6; padding: 0 4px 0 10px; gap: 16px; flex: none; }
.powered { margin-left: auto; width: 101px; color: #999; }
.powered small { display: block; font: 700 8px/9px "Open Sans", sans-serif; }
.powered div { display: flex; align-items: center; justify-content: space-between; height: 14px; }
.powered b { font: 700 16px/14px "DejaVu Sans", sans-serif; color: #808080; }
.powered svg { width: 13px; height: 13px; }
.powered span { display: block; background: #b3b3b3; color: #fff; text-align: center; font: 700 9px/9px "DejaVu Sans", sans-serif; }
</style>
